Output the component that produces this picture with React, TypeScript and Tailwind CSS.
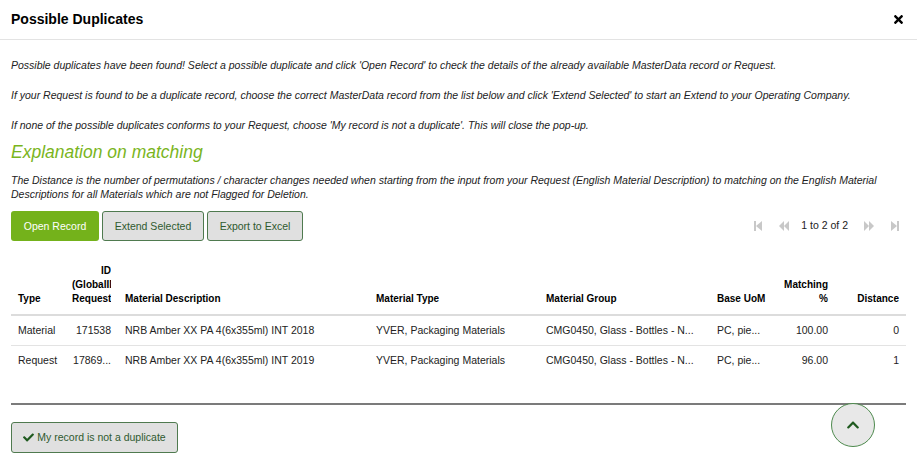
import React from "react";
import { FaCheck, FaChevronUp, FaTimes } from "react-icons/fa";

const font = { fontFamily: '"Liberation Sans", Arial, sans-serif' };

function First() {
  return (
    <svg width="8" height="10" viewBox="0 0 8 10">
      <rect x="0" y="0" width="2" height="10" fill="#c8c8c8" />
      <polygon points="8,0 2,5 8,10" fill="#c8c8c8" />
    </svg>
  );
}
function Prev() {
  return (
    <svg width="10" height="10" viewBox="0 0 10 10">
      <polygon points="5,0 0,5 5,10" fill="#c8c8c8" />
      <polygon points="10,0 5,5 10,10" fill="#c8c8c8" />
    </svg>
  );
}
function Next() {
  return (
    <svg width="10" height="10" viewBox="0 0 10 10">
      <polygon points="0,0 5,5 0,10" fill="#c8c8c8" />
      <polygon points="5,0 10,5 5,10" fill="#c8c8c8" />
    </svg>
  );
}
function Last() {
  return (
    <svg width="8" height="10" viewBox="0 0 8 10">
      <polygon points="0,0 6,5 0,10" fill="#c8c8c8" />
      <rect x="6" y="0" width="2" height="10" fill="#c8c8c8" />
    </svg>
  );
}

const rows = [
  ["Material", "171538", "NRB Amber XX PA 4(6x355ml) INT 2018", "YVER, Packaging Materials", "CMG0450, Glass - Bottles - N...", "PC, pie...", "100.00", "0"],
  ["Request", "17869...", "NRB Amber XX PA 4(6x355ml) INT 2019", "YVER, Packaging Materials", "CMG0450, Glass - Bottles - N...", "PC, pie...", "96.00", "1"],
];

const th = "align-bottom font-bold px-[7px] pb-[8px] leading-[14px] whitespace-nowrap";

export default function App() {
  return (
    <div className="relative w-[917px] h-[469px] bg-white text-[#222] overflow-hidden" style={font}>
      <div className="h-[40px] flex items-center justify-between pl-[11px] pr-[12px] border-b border-[#e3e3e3]">
        <div className="text-[14px] font-bold text-black">Possible Duplicates</div>
        <FaTimes className="text-[13px] text-black" />
      </div>
      <div className="px-[11px]">
        <p className="italic text-[10.5px] leading-[14px] mt-[18px]">
          Possible duplicates have been found! Select a possible duplicate and click 'Open Record' to check the details of the already available MasterData record or Request.
        </p>
        <p className="italic text-[10.5px] leading-[14px] mt-[16px]">
          If your Request is found to be a duplicate record, choose the correct MasterData record from the list below and click 'Extend Selected' to start an Extend to your Operating Company.
        </p>
        <p className="italic text-[10.5px] leading-[14px] mt-[16px]">
          If none of the possible duplicates conforms to your Request, choose 'My record is not a duplicate'. This will close the pop-up.
        </p>
        <h3 className="italic text-[17.5px] leading-[22px] mt-[9px] text-[#7ab51d]">Explanation on matching</h3>
        <p className="italic text-[10.5px] leading-[14px] mt-[10px]">
          The Distance is the number of permutations / character changes needed when starting from the input from your Request (English Material Description) to matching on the English Material Descriptions for all Materials which are not Flagged for Deletion.
        </p>
        <div className="flex items-center justify-between mt-[10px]">
          <div className="flex gap-[3px]">
            <button className="h-[30px] w-[88px] pt-[1px] rounded-[3px] bg-[#74b21b] text-white text-[10.5px]">Open Record</button>
            <button className="h-[30px] w-[102px] pt-[1px] rounded-[3px] bg-[#e0e0e0] border border-[#4f7a4f] text-[#2f5a2f] text-[10.5px]">Extend Selected</button>
            <button className="h-[30px] w-[96px] pt-[1px] rounded-[3px] bg-[#e0e0e0] border border-[#4f7a4f] text-[#2f5a2f] text-[10.5px]">Export to Excel</button>
          </div>
          <div className="flex items-center text-[10.5px] text-[#222] pr-[7px]">
            <span><First /></span>
            <span className="ml-[17px]"><Prev /></span>
            <span className="ml-[12px]">1 to 2 of 2</span>
            <span className="ml-[16px]"><Next /></span>
            <span className="ml-[17px]"><Last /></span>
          </div>
        </div>
        <table className="mt-[23px] w-[895px] table-fixed border-collapse text-[10.5px]">
          <colgroup>
            <col className="w-[54px]" />
            <col className="w-[53px]" />
            <col className="w-[251px]" />
            <col className="w-[170px]" />
            <col className="w-[171px]" />
            <col className="w-[60px]" />
            <col className="w-[65px]" />
            <col className="w-[71px]" />
          </colgroup>
          <thead>
            <tr className="border-b-2 border-[#dcdcdc] text-black text-[10px]">
              <th className={th + " text-left"}>Type</th>
              <th className={th + " text-right"}>
                <div className="overflow-hidden">ID</div>
                <div className="overflow-hidden text-left">(GlobalID</div>
                <div className="overflow-hidden text-left">RequestID</div>
              </th>
              <th className={th + " text-left"}>Material Description</th>
              <th className={th + " text-left"}>Material Type</th>
              <th className={th + " text-left"}>Material Group</th>
              <th className={th + " text-left"}>Base UoM</th>
              <th className={th + " text-right"}>Matching<br />%</th>
              <th className={th + " text-right"}>Distance</th>
            </tr>
          </thead>
          <tbody>
            {rows.map((r, i) => (
              <tr key={i} className={i === 0 ? "border-b border-[#e3e3e3]" : ""}>
                <td className="h-[30px] pl-[7px] pt-[2px] whitespace-nowrap">{r[0]}</td>
                <td className="h-[30px] px-[7px] pt-[2px] text-right whitespace-nowrap overflow-hidden">{r[1]}</td>
                <td className="h-[30px] px-[7px] pt-[2px] whitespace-nowrap">{r[2]}</td>
                <td className="h-[30px] px-[7px] pt-[2px] whitespace-nowrap">{r[3]}</td>
                <td className="h-[30px] px-[7px] pt-[2px] whitespace-nowrap">{r[4]}</td>
                <td className="h-[30px] px-[7px] pt-[2px] whitespace-nowrap">{r[5]}</td>
                <td className="h-[30px] px-[7px] pt-[2px] text-right whitespace-nowrap">{r[6]}</td>
                <td className="h-[30px] px-[7px] pt-[2px] text-right whitespace-nowrap">{r[7]}</td>
              </tr>
            ))}
          </tbody>
        </table>
        <div className="mt-[28px] w-[895px] h-[2px] bg-[#7b7b7b]" />
        <button className="mt-[17px] h-[31px] w-[167px] rounded-[3px] bg-[#e0e0e0] border border-[#4f7a4f] text-[#2f5a2f] text-[10.5px] flex items-center justify-center gap-[3px]">
          <FaCheck className="text-[11px] text-[#1f5a1f]" />
          <span>My record is not a duplicate</span>
        </button>
      </div>
      <div className="absolute left-[831px] top-[403px] w-[44px] h-[44px] rounded-full bg-[#e8e8e8] border border-[#4e8a4e] flex items-center justify-center">
        <FaChevronUp className="text-[14px] text-[#1f5a1f]" />
      </div>
    </div>
  );
}
